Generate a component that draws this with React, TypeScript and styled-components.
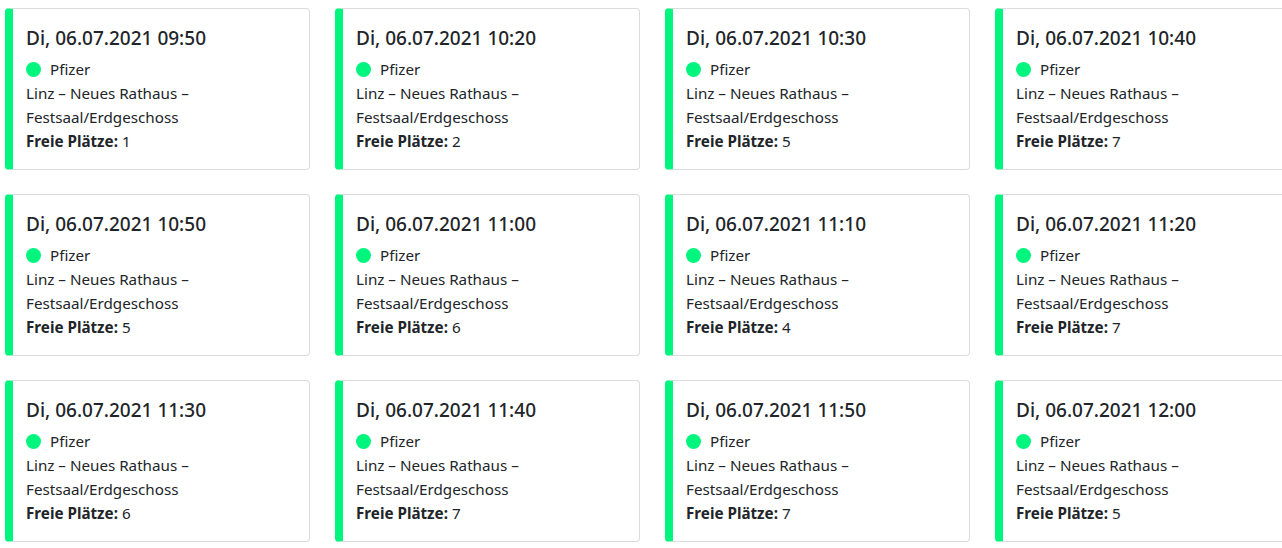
import styled, { createGlobalStyle } from "styled-components";

interface Slot {
  time: string;
  seats: number;
}

const GlobalStyle = createGlobalStyle`
  html, body {
    margin: 0;
    padding: 0;
    background: #fff;
    overflow: hidden;
  }
  body {
    font-family: "Noto Sans", "Open Sans", Arial, sans-serif;
    color: #212529;
  }
`;

const Grid = styled.div`
  display: grid;
  grid-template-columns: repeat(4, 305px);
  column-gap: 25px;
  row-gap: 24px;
  padding: 8px 0 0 5px;
  width: 1400px;
`;

const Card = styled.div`
  border: 1px solid #dcdcdc;
  border-left: 8px solid #00f57f;
  border-radius: 4px;
  padding: 17px 16px 16px 13px;
  background: #fff;
  height: 162px;
  box-sizing: border-box;
`;

const Title = styled.h5`
  margin: 0 0 7px;
  font-size: 19px;
  font-weight: 500;
  line-height: 24px;
`;

const Line = styled.div`
  font-size: 15.2px;
  line-height: 24px;
  display: flex;
  align-items: center;
`;

const Dot = styled.span<{ $color: string }>`
  width: 15px;
  height: 15px;
  border-radius: 50%;
  background: ${(p) => p.$color};
  margin-right: 9px;
  flex-shrink: 0;
`;

const Label = styled.b`
  font-weight: 700;
  margin-right: 4px;
`;

const slots: Slot[] = [
  { time: "09:50", seats: 1 },
  { time: "10:20", seats: 2 },
  { time: "10:30", seats: 5 },
  { time: "10:40", seats: 7 },
  { time: "10:50", seats: 5 },
  { time: "11:00", seats: 6 },
  { time: "11:10", seats: 4 },
  { time: "11:20", seats: 7 },
  { time: "11:30", seats: 6 },
  { time: "11:40", seats: 7 },
  { time: "11:50", seats: 7 },
  { time: "12:00", seats: 5 },
];

export default function App() {
  return (
    <>
      <GlobalStyle />
      <Grid>
        {slots.map((slot) => (
          <Card key={slot.time}>
            <Title>Di, 06.07.2021 {slot.time}</Title>
            <Line>
              <Dot $color="#00f57f" />
              Pfizer
            </Line>
            <Line>Linz – Neues Rathaus –</Line>
            <Line>Festsaal/Erdgeschoss</Line>
            <Line>
              <Label>Freie Plätze:</Label>
              {slot.seats}
            </Line>
          </Card>
        ))}
      </Grid>
    </>
  );
}
